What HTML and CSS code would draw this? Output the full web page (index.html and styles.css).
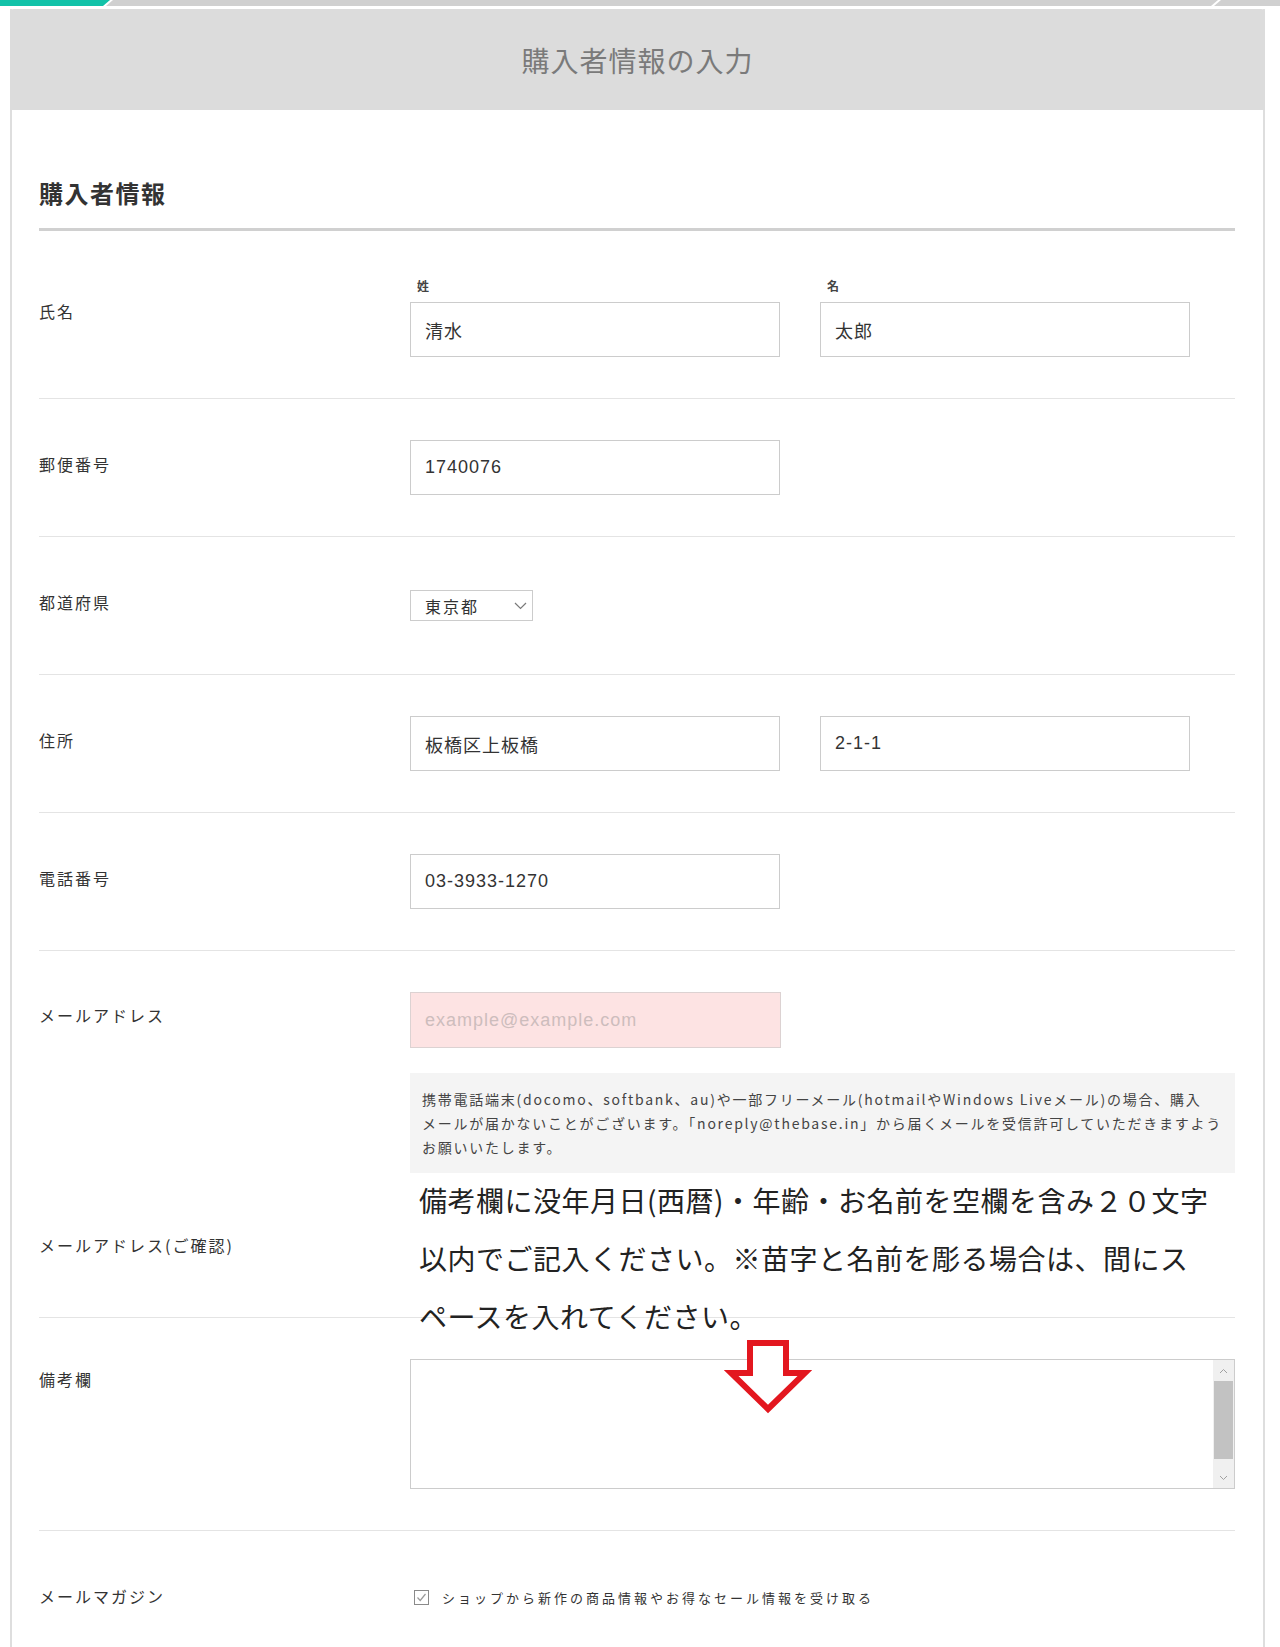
FILE: index.html
```html
<!DOCTYPE html>
<html lang="ja">
<head>
<meta charset="utf-8">
<title>購入者情報の入力</title>
<link rel="stylesheet" href="styles.css">
</head>
<body>
<div class="steps">
  <div class="step step-first"></div>
  <div class="step step-mid"></div>
  <div class="step step-last"></div>
</div>
<div class="card">
  <div class="card-head"><h1 class="card-title">購入者情報の入力</h1></div>
  <div class="card-body">
    <h2 class="section-title">購入者情報</h2>

    <div class="row">
      <div class="label">氏名</div>
      <div class="field pair">
        <div class="pair-item"><div class="sublabel">姓</div><input class="input" type="text" value="清水"></div>
        <div class="pair-item"><div class="sublabel">名</div><input class="input" type="text" value="太郎"></div>
      </div>
    </div>

    <div class="row">
      <div class="label">郵便番号</div>
      <div class="field"><input class="input" type="text" value="1740076"></div>
    </div>

    <div class="row">
      <div class="label">都道府県</div>
      <div class="field">
        <div class="select-box"><span>東京都</span>
          <svg class="chev" width="13" height="8" viewBox="0 0 13 8"><polyline points="1,1 6.5,6.5 12,1" fill="none" stroke="#7a7a7a" stroke-width="1.2"/></svg>
        </div>
      </div>
    </div>

    <div class="row">
      <div class="label">住所</div>
      <div class="field pair">
        <input class="input" type="text" value="板橋区上板橋">
        <input class="input" type="text" value="2-1-1">
      </div>
    </div>

    <div class="row">
      <div class="label">電話番号</div>
      <div class="field"><input class="input" type="text" value="03-3933-1270"></div>
    </div>

    <div class="row row-top row-email">
      <div class="label label-input">メールアドレス</div>
      <div class="field">
        <input class="input input-email" type="text" placeholder="example@example.com">
        <p class="notice">携帯電話端末(docomo、softbank、au)や一部フリーメール(hotmailやWindows Liveメール)の場合、購入<br>メールが届かないことがございます。「noreply@thebase.in」から届くメールを受信許可していただきますよう<br>お願いいたします。</p>
      </div>
    </div>

    <div class="row">
      <div class="label">メールアドレス(ご確認)</div>
      <div class="field">
        <p class="annotation">備考欄に没年月日(西暦)・年齢・お名前を空欄を含み２０文字<br>以内でご記入ください。※苗字と名前を彫る場合は、間にス<br>ペースを入れてください。</p>
      </div>
    </div>

    <div class="row row-top">
      <div class="label label-memo">備考欄</div>
      <div class="field">
        <div class="memo">
          <textarea class="memo-text"></textarea>
          <div class="scrollbar">
            <div class="sb-btn"><svg width="9" height="6" viewBox="0 0 9 6"><polyline points="1,5 4.5,1.5 8,5" fill="none" stroke="#a0a0a0" stroke-width="1"/></svg></div>
            <div class="sb-thumb"></div>
            <div class="sb-track"></div>
            <div class="sb-btn"><svg width="9" height="6" viewBox="0 0 9 6"><polyline points="1,1 4.5,4.5 8,1" fill="none" stroke="#a0a0a0" stroke-width="1"/></svg></div>
          </div>
          <svg class="arrow" width="88" height="78" viewBox="0 0 88 78">
            <polygon points="26,5 62,5 62,35 81,35 44,71 7,35 26,35" fill="#fff" stroke="#e3171f" stroke-width="6" stroke-linejoin="miter"/>
          </svg>
        </div>
      </div>
    </div>

    <div class="row">
      <div class="label">メールマガジン</div>
      <div class="field check">
        <svg class="checkbox" width="15" height="15" viewBox="0 0 15 15"><rect x="0.5" y="0.5" width="14" height="14" fill="#fff" stroke="#8a8a8a"/><polyline points="3.5,7.5 6.2,10.5 11.5,4" fill="none" stroke="#9a9a9a" stroke-width="1.2"/></svg>
        <span class="check-text">ショップから新作の商品情報やお得なセール情報を受け取る</span>
      </div>
    </div>
  </div>
</div>
</body>
</html>
```

FILE: styles.css
```css
* { box-sizing: border-box; }
html, body { margin: 0; padding: 0; background: #fff; }
body {
  width: 1280px;
  font-family: "Noto Sans CJK JP", "Liberation Sans", sans-serif;
  color: #333;
}

/* progress strip */
.steps { display: flex; height: 6px; }
.step { height: 6px; background: #d0d0d0; }
.step-first {
  width: 110px;
  background: #12c2a8;
  clip-path: polygon(0 0, 100% 0, calc(100% - 7px) 100%, 0 100%);
}
.step-mid {
  width: 1112px;
  margin-left: -4px;
  clip-path: polygon(7px 0, 100% 0, calc(100% - 7px) 100%, 0 100%);
}
.step-last {
  flex: 1;
  margin-left: -4px;
  clip-path: polygon(7px 0, 100% 0, 100% 100%, 0 100%);
}

/* card */
.card {
  margin: 3px 0 0 10px;
  width: 1255px;
  border-left: 2px solid #dedede;
  border-right: 2px solid #dedede;
}
.card-head {
  margin: 0 -2px;
  height: 101px;
  background: #dcdcdc;
  border-radius: 4px 4px 0 0;
  display: flex;
  align-items: center;
  justify-content: center;
}
.card-title {
  margin: 0;
  font-size: 28px;
  line-height: 1;
  font-weight: 400;
  color: #7a7a7a;
  letter-spacing: 1px;
}
.card-body { padding: 0 28px 0 27px; }

.section-title {
  margin: 0;
  padding: 66px 0 18px;
  font-size: 24px;
  line-height: 34px;
  font-weight: 700;
  letter-spacing: 1.5px;
  color: #333;
  border-bottom: 3px solid #d0d0d0;
}

/* rows */
.row {
  display: flex;
  align-items: center;
  min-height: 138px;
  padding: 41px 0;
  border-bottom: 1px solid #e4e4e4;
}
.row-top { align-items: flex-start; }
.row-email { padding-bottom: 7px; border-bottom: none; }
.label {
  flex: none;
  width: 371px;
  margin-top: -7px;
  font-size: 16px;
  line-height: 24px;
  letter-spacing: 2px;
  color: #333;
}
.label-input { margin-top: -4px; line-height: 55px; }
.label-memo { margin-top: -4px; line-height: 48px; }
.field { flex: 1; min-width: 0; }
.pair { display: flex; gap: 40px; }
.pair-item { width: 370px; }
.sublabel {
  margin: 4px 0 6px 7px;
  font-size: 12px;
  line-height: 20px;
  font-weight: 700;
  color: #444;
}
.input {
  display: block;
  width: 370px;
  height: 55px;
  margin: 0;
  padding: 0 14px;
  border: 1px solid #cccccc;
  border-radius: 0;
  background: #fff;
  font-family: "Liberation Sans", "Noto Sans CJK JP", sans-serif;
  font-size: 18px;
  letter-spacing: 1px;
  color: #333;
  outline: none;
}
.input-email { width: 371px; height: 56px; background: #fde3e3; border-color: #dcd2d2; }
.input-email::placeholder { color: #cdbdbd; }

.select-box {
  width: 123px;
  height: 31px;
  border: 1px solid #cccccc;
  display: flex;
  align-items: center;
  justify-content: space-between;
  padding: 0 5px 0 14px;
  font-size: 16px;
  letter-spacing: 2px;
  color: #333;
}
.chev { display: block; }

.notice {
  margin: 25px 0 0;
  padding: 14px 12px;
  background: #f4f4f4;
  font-size: 14px;
  line-height: 24px;
  letter-spacing: 1.75px;
  white-space: nowrap;
  color: #444;
}

.annotation {
  margin: -51px 0 -69px 9px;
  font-size: 28px;
  line-height: 58px;
  letter-spacing: 0.5px;
  white-space: nowrap;
  color: #222;
}

/* memo textarea */
.memo {
  position: relative;
  width: 825px;
  height: 130px;
  border: 1px solid #cccccc;
  display: flex;
}
.memo-text {
  flex: 1;
  border: none;
  resize: none;
  outline: none;
  padding: 10px;
  font: inherit;
  background: #fff;
}
.scrollbar {
  flex: none;
  width: 21px;
  display: flex;
  flex-direction: column;
  background: #f0f0f0;
}
.sb-btn {
  height: 21px;
  display: flex;
  align-items: center;
  justify-content: center;
}
.sb-thumb { height: 78px; margin: 0 1px; background: #c2c2c2; }
.sb-track { flex: 1; }
.arrow { position: absolute; left: 313px; top: -22px; }

/* mail magazine */
.check { display: flex; align-items: center; gap: 13px; padding-left: 4px; margin-top: -5px; }
.checkbox { display: block; flex: none; }
.check-text { font-size: 13px; letter-spacing: 3px; color: #333; }
```
